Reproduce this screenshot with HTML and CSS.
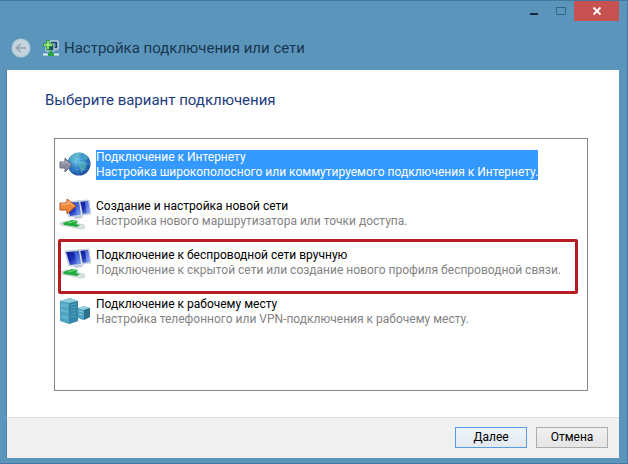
FILE: index.html
```html
<!DOCTYPE html>
<html lang="ru">
<head>
  <meta charset="UTF-8" />
  <meta name="viewport" content="width=device-width, initial-scale=1.0"/>
  <title>Настройка подключения или сети</title>
  <link rel="stylesheet" href="styles.css">
</head>
<body>
  <div class="window">
    <div class="titlebar">
      <button class="win-button" aria-label="Свернуть">
        <svg width="10" height="10" viewBox="0 0 10 10"><path d="M1 8h8" stroke="#142b3c" stroke-width="2"/></svg>
      </button>
      <button class="win-button" aria-label="Развернуть" disabled>
        <svg width="10" height="10" viewBox="0 0 10 10"><path d="M.5 1.5h9v7h-9z" fill="none" stroke="#2f668c"/><path d="M0 1.5h10" stroke="#2f668c"/></svg>
      </button>
      <button class="win-button close" aria-label="Закрыть">
        <svg width="10" height="10" viewBox="0 0 10 10"><path d="M1.500 1.500l7 7M8.500 1.500l-7 7" stroke="#fff" stroke-width="1.800"/></svg>
      </button>
    </div>

    <header class="header">
      <button class="back" aria-label="Назад" disabled>
        <svg width="20" height="20" viewBox="0 0 20 20">
          <circle cx="10" cy="10" r="9.500" fill="#b5c9d6"/>
          <circle cx="10" cy="10" r="8" fill="#c6d3dc"/>
          <path d="M15 10H6M9.500 6L5.500 10l4 4" fill="none" stroke="#8fa3b0" stroke-width="1.600"/>
        </svg>
      </button>
      <svg class="header-icon" width="16" height="16" viewBox="0 0 16 16">
        <path d="M7 1h8v8H7z" fill="#3c6c96" stroke="#e6f1f7"/>
        <path d="M8.500 2.500h5v5h-5z" fill="none" stroke="#1c3b66"/>
        <path d="M3 4h8v7H3z" fill="#1c5163" stroke="#dcebf3"/>
        <path d="M3.500 0h3v3.500H10v3H6.500V10h-3V6.500H0v-3h3.500z" fill="#1c9b22"/>
        <path d="M5 1v8M1 5h8" stroke="#b8f58d" stroke-width="1.400"/>
        <path d="M0 14.500h16" stroke="#dcebf0" stroke-width="2"/>
        <path d="M8 11v3M5 14.500h6" stroke="#26a443" stroke-width="3"/>
      </svg>
      <span class="caption">Настройка подключения или сети</span>
    </header>

    <main class="content">
      <h1 id="heading">Выберите вариант подключения</h1>
      <div class="options" role="radiogroup" aria-labelledby="heading">
        <label class="option">
          <input type="radio" name="connection" checked>
          <svg width="32" height="32" viewBox="0 0 32 32">
            <defs>
              <radialGradient id="globe" cx=".4" cy=".3" r=".7">
                <stop offset="0" stop-color="#72c7ef"/>
                <stop offset=".55" stop-color="#2b83c8"/>
                <stop offset="1" stop-color="#1c4f9f"/>
              </radialGradient>
            </defs>
            <circle cx="20" cy="14" r="11.500" fill="url(#globe)"/>
            <path d="M12 6c3-3 8-4 11-3l-2 3-3 1-1 4-4 1-2-2zM20 12l5-1 3 3-2 5-4 4-1-5-3-3zM25 4l4 4-2 2-3-2z" fill="#63bdb0" opacity=".55"/>
            <path d="M11 7c4-4 12-5 17-1M9 14c7-2 15-2 22 0M12 22c4-3 12-4 17-2M19 3c-4 6-3 16 1 22" fill="none" stroke="#b4e6fa" stroke-width=".5" opacity=".4"/>
            <path d="M1 12h5V8l7 7-7 7v-4H1z" fill="#8b8c9f" stroke="#696c80"/>
            <path d="M2 13h5v-2l4 4" fill="none" stroke="#b9b9c5"/>
          </svg>
          <span class="text">
            <span class="name">Подключение к Интернету</span>
            <span class="description">Настройка широкополосного или коммутируемого подключения к Интернету.</span>
          </span>
        </label>

        <label class="option">
          <input type="radio" name="connection">
          <svg width="32" height="32" viewBox="0 0 32 32">
            <defs>
              <linearGradient id="screen" x2="1" y2="1">
                <stop offset="0" stop-color="#0b168b"/>
                <stop offset=".5" stop-color="#1a2fb8"/>
                <stop offset="1" stop-color="#7da4f0"/>
              </linearGradient>
            </defs>
            <g id="computers">
              <path d="M18 2l12-1 2 14-10 1z" fill="#e1e8f2" stroke="#a7b3c7" stroke-width=".6"/>
              <path d="M20 3l9-1 2 12-8 1z" fill="url(#screen)"/>
              <path d="M26 2.500l3-.3 1.700 11.800-3 .4z" fill="#9fc0ff" opacity=".5"/>
              <path d="M6 3l15-1 3 15-14 1z" fill="#e9eff7" stroke="#9ba9c0" stroke-width=".6"/>
              <path d="M7 4l13-1 2 13-11 1z" fill="url(#screen)"/>
              <path d="M15 3.500l5-.5 2 13-4 .3z" fill="#8fb9ff" opacity=".35"/>
              <path d="M15 18l7-1 2 2-8 1z" fill="#c0cad8"/>
              <path d="M1 24l7-2 17 4 1 3-4 1L2 26z" fill="#dbe3df" stroke="#a8b7b0" stroke-width=".5"/>
              <path d="M4 24l9-3 6 1-2 3 4 1-3 2-6-1-7-1z" fill="#21aa42"/>
              <path d="M9 24l8-2" stroke="#79dc7d"/>
            </g>
            <path d="M1 4h7V0l9 7-9 8v-4H1z" fill="#ef883a" stroke="#b5521f"/>
            <path d="M2 5h7V2l6 5" fill="none" stroke="#ffc78c"/>
          </svg>
          <span class="text">
            <span class="name">Создание и настройка новой сети</span>
            <span class="description">Настройка нового маршрутизатора или точки доступа.</span>
          </span>
        </label>

        <label class="option marked">
          <input type="radio" name="connection">
          <svg width="32" height="32" viewBox="0 0 32 32"><use href="#computers"/></svg>
          <span class="text">
            <span class="name">Подключение к беспроводной сети вручную</span>
            <span class="description">Подключение к скрытой сети или создание нового профиля беспроводной связи.</span>
          </span>
        </label>

        <label class="option">
          <input type="radio" name="connection">
          <svg width="32" height="32" viewBox="0 0 32 32">
            <path d="M1 4l10-3 8 3v20l-9 3-9-3z" fill="#4ba3c1"/>
            <path d="M1 4l10-3 8 3-8 2z" fill="#91cddd"/>
            <path d="M10 6l9-2v20l-9 3z" fill="#3586a8"/>
            <path d="M2 6l7 1v4l-7-1zM2 12l7 1v3l-7-1zM2 18l7 1v3l-7-1z" fill="#79c3d6" opacity=".5"/>
            <path d="M12 8l5-1M12 11l5-1M12 14l5-1M12 17l5-1M12 20l5-1" stroke="#71b9cf" opacity=".5"/>
            <path d="M19 11l6-2 6 2v9l-7 3-5-2z" fill="#4ba3c1"/>
            <path d="M19 11l6-2 6 2-7 2z" fill="#9bd2df"/>
            <path d="M25 13l6-2v9l-6 3z" fill="#2f6f8e"/>
            <path d="M20 14l4 1M20 17l4 1" stroke="#8acddb"/>
          </svg>
          <span class="text">
            <span class="name">Подключение к рабочему месту</span>
            <span class="description">Настройка телефонного или VPN-подключения к рабочему месту.</span>
          </span>
        </label>
      </div>
    </main>

    <footer class="footer">
      <button class="button primary">Далее</button>
      <button class="button">Отмена</button>
    </footer>
  </div>
</body>
</html>
```
FILE: styles.css
```css
*, *::before, *::after { box-sizing: border-box; }

body {
  margin: 0;
  font-family: Roboto, "Noto Sans", sans-serif;
  font-size: 12px;
  line-height: 15px;
  color: #000;
}

button {
  font: inherit;
  padding: 0;
  border: 0;
}

.window {
  display: flex;
  flex-direction: column;
  min-height: 100vh;
  padding: 0 8px 5px 6px;
  background: #5c95bc;
  border: 1px solid #4478a0;
  border-left: 0;
}

.titlebar {
  display: flex;
  justify-content: flex-end;
}

.win-button {
  display: flex;
  align-items: center;
  justify-content: center;
  width: 27px;
  height: 20px;
  background: none;
}

.win-button.close {
  width: 45px;
  background: #c75050;
}

.header {
  display: flex;
  align-items: center;
  height: 49px;
  padding: 5px 5px 0;
}

.back {
  display: flex;
  background: none;
}

.header-icon {
  margin: 0 5px 0 12px;
}

.caption {
  font-size: 15px;
  line-height: 20px;
  color: #17364f;
}

.content {
  flex: 1;
  display: flex;
  flex-direction: column;
  padding: 20px 31px 26px 38px;
  background: #fff;
  border-left: 1px solid #4d84aa;
}

h1 {
  margin: 0 0 28px;
  font-size: 15px;
  line-height: 20px;
  font-weight: normal;
  color: #1c3a7e;
}

.options {
  flex: 1;
  display: flex;
  flex-direction: column;
  gap: 17px;
  margin-left: 9px;
  padding: 11px 4px;
  border: 1px solid #828790;
}

.option {
  position: relative;
  display: flex;
  align-items: flex-start;
  gap: 5px;
  height: 32px;
}

.option input {
  position: absolute;
  opacity: 0;
  margin: 0;
}

.option svg {
  flex: none;
}

.text {
  display: flex;
  flex-direction: column;
}

.description {
  color: #838383;
}

.option input:checked ~ .text,
.option input:checked ~ .text .description {
  background: #3399ff;
  color: #fff;
}

.marked::after {
  content: "";
  position: absolute;
  inset: -9px 5px -14px -1px;
  border: 3px solid #b71c22;
  border-radius: 2px;
}

.footer {
  display: flex;
  justify-content: flex-end;
  gap: 9px;
  padding: 9px 11px 10px;
  background: #f0f0f0;
  border-top: 1px solid #dfdfdf;
  border-left: 1px solid #4d84aa;
}

.button {
  width: 72px;
  height: 21px;
  background: linear-gradient(#f0f0f0, #e5e5e5);
  border: 1px solid #acacac;
}

.button.primary {
  background: linear-gradient(#ecf4fb, #e4e9ee);
  border-color: #569de5;
}
```
